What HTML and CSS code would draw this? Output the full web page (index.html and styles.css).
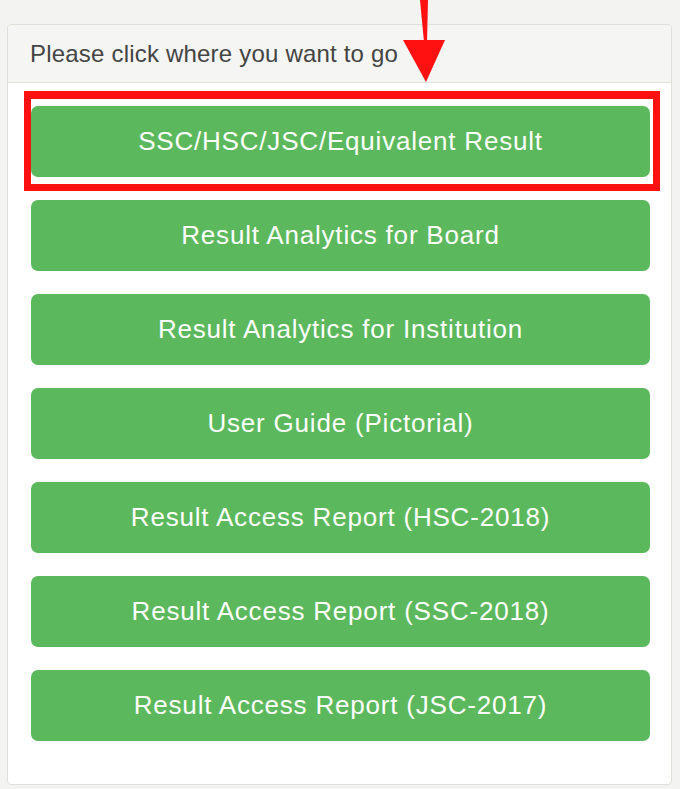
FILE: index.html
```html
<!DOCTYPE html>
<html lang="en">
<head>
    <meta charset="UTF-8">
    <meta name="viewport" content="width=device-width, initial-scale=1.0">
    <title>Education Board Results</title>
    <link rel="stylesheet" href="styles.css">
</head>
<body>

    <div class="panel">
        <div class="panel-heading">Please click where you want to go</div>
        <div class="panel-body">
            <a class="btn highlight" href="#">SSC/HSC/JSC/Equivalent Result</a>
            <a class="btn" href="#">Result Analytics for Board</a>
            <a class="btn" href="#">Result Analytics for Institution</a>
            <a class="btn" href="#">User Guide (Pictorial)</a>
            <a class="btn" href="#">Result Access Report (HSC-2018)</a>
            <a class="btn" href="#">Result Access Report (SSC-2018)</a>
            <a class="btn" href="#">Result Access Report (JSC-2017)</a>
        </div>
    </div>

    <!-- annotation arrow -->
    <svg class="arrow" width="60" height="90" viewBox="0 0 60 90">
        <polygon points="20,0 28,0 27,42 24,42" fill="#ff1111"/>
        <polygon points="3,40 45,40 26,82" fill="#ff1111"/>
    </svg>

</body>
</html>
```

FILE: styles.css
```css
body {
    margin: 0;
    background-color: rgb(243, 243, 241);
    font-family: 'Liberation Sans', Arial, Helvetica, sans-serif;
    position: relative;
}

.panel {
    margin: 24px 8px 7px 7px;
    background-color: rgb(255, 255, 255);
    border: 1px solid rgb(224, 224, 218);
    border-radius: 4px;
}

.panel-heading {
    height: 58px;
    box-sizing: border-box;
    padding: 0 22px;
    display: flex;
    align-items: center;
    font-size: 24px;
    letter-spacing: 0.2px;
    color: rgb(68, 68, 68);
    background-color: rgb(245, 245, 243);
    border-bottom: 1px solid rgb(226, 226, 220);
    border-radius: 4px 4px 0 0;
}

.panel-body {
    padding: 23px 21px 43px 23px;
    display: flex;
    flex-direction: column;
    gap: 23px;
}

.btn {
    display: flex;
    justify-content: center;
    align-items: center;
    height: 71px;
    font-size: 26px;
    letter-spacing: 0.8px;
    color: rgb(255, 255, 255);
    text-decoration: none;
    background-color: rgb(92, 184, 92);
    border-radius: 7px;
}

.highlight {
    position: relative;
}

.highlight::after {
    content: '';
    position: absolute;
    left: -7px;
    right: -10px;
    top: -15px;
    bottom: -14px;
    border: 7px solid rgb(255, 17, 17);
    border-top-width: 8px;
}

.arrow {
    position: absolute;
    left: 400px;
    top: 0;
}
```
